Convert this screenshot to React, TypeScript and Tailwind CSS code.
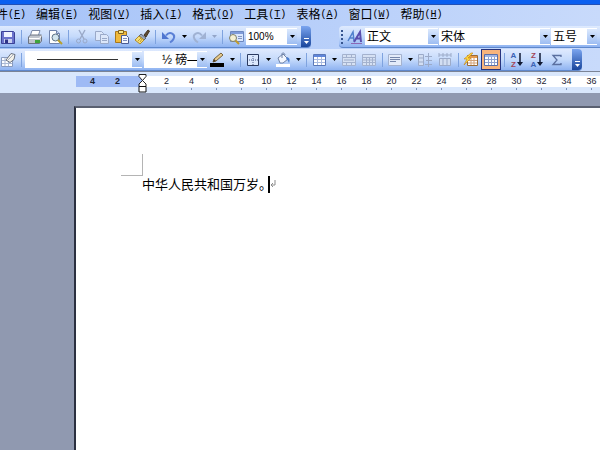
import React from 'react';
import { clsx } from 'clsx';

const menus = [
  { label: '文件', mnemonic: 'F' },
  { label: '编辑', mnemonic: 'E' },
  { label: '视图', mnemonic: 'V' },
  { label: '插入', mnemonic: 'I' },
  { label: '格式', mnemonic: 'O' },
  { label: '工具', mnemonic: 'T' },
  { label: '表格', mnemonic: 'A' },
  { label: '窗口', mnemonic: 'W' },
  { label: '帮助', mnemonic: 'H' },
];

const rulerMarks = Array.from({ length: 18 }, (_, i) => (i + 1) * 2);

const icons = {
  insertTable: (
    <>
      <path d="M1.5 5.5h11v9h-11z" fill="#fbfcff" stroke="#8a9bbd" />
      <path d="M2 8.5h10M2 11.5h10M5 6v8M8.500 6v8" stroke="#a9b8d4" />
      <path d="M6 8l5-6.500 4 1-1 5-4 3z" fill="#f4f2ea" stroke="#68707f" />
      <path d="M8 8l5-5" stroke="#a9b0be" />
    </>
  ),
  save: (
    <>
      <path d="M1.5 2.5h12l1 1v11h-13z" fill="#6a72cc" stroke="#3b4196" />
      <path d="M4 3h8v5H4z" fill="#eef2ff" />
      <path d="M4 10h8v4H4z" fill="#c9cff0" />
      <path d="M5 10.5h3V14H5z" fill="#2e3388" />
    </>
  ),
  print: (
    <>
      <path d="M5 1.5h8l-2 6H3z" fill="#fff" stroke="#7b8aa8" />
      <path d="M1.5 8l2-2h11v6l-2 2.500h-11z" fill="#c0c5cd" stroke="#6c7482" />
      <path d="M2 9.5h10.5l2-3" stroke="#fff" fill="none" />
      <path d="M8 12.500h5" stroke="#3fa43c" strokeWidth="3" />
    </>
  ),
  preview: (
    <>
      <path d="M2.5 1.5h7l3 3v10h-10z" fill="#fff" stroke="#7184ad" />
      <path d="M9.500 1.500v3h3" fill="#c5d4f0" stroke="#7184ad" />
      <circle cx="8.500" cy="8.500" r="3.500" fill="#d4e6ee" stroke="#5e7286" />
      <path d="M11 11l4 4" stroke="#b8a02c" strokeWidth="2" />
    </>
  ),
  cut: (
    <g stroke="#9aa9c8" fill="none">
      <path d="M5 1l5 9M11 1L6 10" strokeWidth="1.400" />
      <circle cx="4.500" cy="12" r="2" />
      <circle cx="11" cy="12" r="2" />
    </g>
  ),
  copy: (
    <g fill="#dce7fa" stroke="#9aa9c8">
      <path d="M1.500 2.500h6l2 2v7h-8z" />
      <path d="M6.500 5.500h6l2 2v7h-8z" />
      <path d="M8 9.500h5M8 11.500h5" />
    </g>
  ),
  paste: (
    <>
      <path d="M1.500 2.500h11v11h-11z" fill="#f0b93a" stroke="#a8781c" />
      <path d="M4.500 1.500h5v3h-5z" fill="#f7e88a" stroke="#80601f" />
      <path d="M7.500 6.500h5l2 2v6h-7z" fill="#f4f7ff" stroke="#4b5c94" />
      <path d="M9 9.500h4M9 11.500h4" stroke="#7f8fbd" />
    </>
  ),
  brush: (
    <>
      <path d="M10 6l4-5 1.500 1L12 8z" fill="#5d4a33" stroke="#463722" />
      <path d="M7 5l5 4-2 2-5-4z" fill="#9aa6b8" stroke="#5b6576" />
      <path d="M5 7l5 4-4 4-5-4z" fill="#f6df73" stroke="#b08a2c" />
      <path d="M4 12l3-3M6 13l2-3" stroke="#c59b2b" />
    </>
  ),
  undo: (
    <>
      <path d="M5 6.500c4-5 10-1 7.500 3.500-.7 1.500-2 2.500-3.500 3.500" fill="none" stroke="#5b80d6" strokeWidth="2" />
      <path d="M1 3v7h7z" fill="#4f76d0" />
    </>
  ),
  redo: (
    <>
      <path d="M11 6.500c-4-5-10-1-7.500 3.500.7 1.500 2 2.500 3.500 3.500" fill="none" stroke="#a0b2d3" strokeWidth="2" />
      <path d="M15 3v7H8z" fill="#a0b2d3" />
    </>
  ),
  readMode: (
    <>
      <path d="M2.500 2.500h13v10h-13z" fill="#d9e7ff" stroke="#6c88c0" />
      <path d="M3 3h12v2H3z" fill="#7f9cda" />
      <path d="M10 7.500h4M10 9.500h4" stroke="#8296c0" />
      <circle cx="5" cy="9" r="3.500" fill="#f4f1d4" stroke="#7c7f68" />
      <path d="M7.500 11.500l3.500 3.500" stroke="#c09a2c" strokeWidth="2" />
    </>
  ),
  styles: (
    <>
      <path d="M1 12L6 3l1 9M3 9h4" fill="none" stroke="#5080cc" strokeWidth="1.500" />
      <path d="M7 13l6-10 1 10M9 9.500h5" fill="none" stroke="#5a4fae" strokeWidth="2" />
      <path d="M4 14.500h11" stroke="#8c68b5" />
    </>
  ),
  lineColor: (
    <>
      <path d="M4 10l1-3 7-6 2 2-7 6z" fill="#e6c98c" stroke="#75623e" />
      <path d="M4 10l1-3 2 2z" fill="#4b3b24" />
      <path d="M1 11h14v4H1z" fill="#000" />
    </>
  ),
  border: (
    <>
      <path d="M2.500 2.500h11v11h-11z" fill="#dbe8fe" stroke="#2b3a60" />
      <path d="M8 4v9M4 8h9" stroke="#4b5d8b" strokeDasharray="1 1" />
    </>
  ),
  bucket: (
    <>
      <path d="M3 6l5-4 5 5-5 4H5z" fill="#f3f7ff" stroke="#6f82a6" />
      <path d="M7 6V2c0-2 3-1 3 1" fill="none" stroke="#6f82a6" />
      <path d="M12 5c3 1 3 3 2 6-1-2-1-3-3-4z" fill="#4b7fd0" />
      <path d="M1 12h14v3H1z" fill="#fff" />
    </>
  ),
  table: (
    <>
      <path d="M2.500 2.500h12v11h-12z" fill="#fff" stroke="#5a78b8" />
      <path d="M3 3h11v2H3z" fill="#5f86da" />
      <path d="M3 7.500h11M3 10.500h11M6.500 5v8M10.500 5v8" stroke="#a9bbe0" />
    </>
  ),
  merge: (
    <g fill="#d6e1f3" stroke="#a4b2ce">
      <path d="M1.500 2.500h13v11h-13z" />
      <path d="M2 5.500h12M2 10.500h12M5.500 3v2.500M10.500 3v2.500M5.500 11v2.500M10.500 11v2.500" />
      <path d="M3 7h10v2H3z" stroke="none" fill="#b9c6de" />
    </g>
  ),
  split: (
    <g fill="#d6e1f3" stroke="#a4b2ce">
      <path d="M1.500 2.500h13v11h-13z" />
      <path d="M2 5.500h12M2 8h12M2 10.500h12M5.500 5v9M8.500 5v9M11.500 5v9" />
    </g>
  ),
  align: (
    <g stroke="#a4b2ce">
      <path d="M1.500 2.500h13v11h-13z" fill="#e3ebf9" />
      <path d="M3 5.500h10M3 7.500h10M3 9.500h6" stroke="#7587ac" />
    </g>
  ),
  rows: (
    <g stroke="#9cabc9" fill="#d2def2">
      <path d="M1.500 2.500h5v11h-5zM1.500 6h5M1.500 10h5" />
      <path d="M8 4.500h7M8 12.500h7M11.500 1v14M9 8.500h6" />
    </g>
  ),
  columns: (
    <g stroke="#9cabc9" fill="#d2def2">
      <path d="M2.500 6.500h11v7h-11zM6 6.500v7M10 6.500v7" />
      <path d="M2 1v4M6 1v4M10 1v4M14 1v4M2 3h12" />
    </g>
  ),
  autoFormat: (
    <>
      <path d="M4.500 3.500h10v10h-10z" fill="#fff" stroke="#9b6b35" />
      <path d="M5 4h9v2H5z" fill="#e59a4e" />
      <path d="M5 8.500h9M5 11h9M8 6v7M11 6v7" stroke="#d3a37a" />
      <path d="M8 1L1 7h3l-3 6 7-7H5l5-5z" fill="#ffd93d" stroke="#c28316" strokeWidth=".6" />
    </>
  ),
  gridlines: (
    <>
      <path d="M1.500 2.500h13v11h-13z" fill="#fff" stroke="#5b6fa8" />
      <path d="M2 3h12v2H2z" fill="#9fb4e4" />
      <path d="M2 7.500h12M2 10.500h12M5.500 5v8M8.500 5v8M11.500 5v8" stroke="#8fa2d0" />
    </>
  ),
  sigma: (
    <path d="M12 5V3.500H4L8 8l-4 4.500h8V11" fill="none" stroke="#5a6f9f" strokeWidth="1.300" />
  ),
};

type IconName = keyof typeof icons;

const Icon = ({ name }: { name: IconName }) => (
  <svg viewBox="0 0 16 16" className="h-4 w-4 shrink-0" fill="none" aria-hidden="true">
    {icons[name]}
  </svg>
);

const ToolButton = ({ icon, label, pressed = false }: { icon: IconName; label: string; pressed?: boolean }) => (
  <button
    type="button"
    aria-label={label}
    aria-pressed={pressed || undefined}
    className={clsx(
      'flex h-[21px] w-5 shrink-0 items-center justify-center',
      pressed && 'border border-[#27347e] bg-[#f8b47c]',
    )}
  >
    <Icon name={icon} />
  </button>
);

const SortButton = ({ top, bottom, label }: { top: string; bottom: string; label: string }) => (
  <button type="button" aria-label={label} className="flex h-[21px] w-5 shrink-0 items-center justify-center gap-px">
    <span className="flex flex-col text-[8px] leading-[9px] font-bold">
      <span className={top === 'A' ? 'text-[#3b62b5]' : 'text-[#a34455]'}>{top}</span>
      <span className={bottom === 'A' ? 'text-[#3b62b5]' : 'text-[#a34455]'}>{bottom}</span>
    </span>
    <svg viewBox="0 0 6 14" className="h-3.5 w-1.5" aria-hidden="true">
      <path d="M3 0v10" stroke="#111a33" strokeWidth="1.500" />
      <path d="M0 9h6L3 13z" fill="#111a33" />
    </svg>
  </button>
);

const Triangle = ({ muted = false }: { muted?: boolean }) => (
  <svg viewBox="0 0 5 3" className="h-[3px] w-[5px]" aria-hidden="true">
    <path d="M0 0h5L2.500 3z" fill={muted ? '#93a5c8' : '#000'} />
  </svg>
);

const DropArrow = ({ label, muted }: { label: string; muted?: boolean }) => (
  <button type="button" aria-label={label} className="flex h-[21px] w-2.5 shrink-0 items-center justify-center">
    <Triangle muted={muted} />
  </button>
);

const Separator = ({ className = 'w-1.5' }: { className?: string }) => (
  <span className={clsx('flex h-3.5 shrink-0 justify-center', className)}>
    <span className="w-px bg-[#7fa3df]" />
  </span>
);

type ComboProps = { label: string; value: string; className: string; textClass?: string; line?: boolean };

const Combo = ({ label, value, className, textClass = 'pl-0.5 text-[12px]', line }: ComboProps) => (
  <span className={clsx('relative flex h-[17px] shrink-0 bg-white', className)}>
    <select aria-label={label} className={clsx('h-full w-full appearance-none pr-2.5 text-black outline-none', textClass)}>
      <option>{value}</option>
    </select>
    {line && <span className="pointer-events-none absolute top-2 right-6 left-3 h-px bg-[#333]" />}
    <span className="pointer-events-none absolute inset-y-px right-0 flex w-2.5 items-center justify-center bg-gradient-to-b from-[#dce9fd] to-[#9dbdf2]">
      <Triangle />
    </span>
  </span>
);

const MoreButtons = () => (
  <button
    type="button"
    aria-label="工具栏选项"
    className="ml-auto flex w-2.5 shrink-0 flex-col items-center justify-end gap-0.5 self-stretch rounded-r-sm bg-gradient-to-b from-[#7ba5f0] to-[#1a469c] pb-[3px]"
  >
    <span className="h-px w-[5px] bg-white" />
    <svg viewBox="0 0 5 3" className="h-[3px] w-[5px]" aria-hidden="true">
      <path d="M0 0h5L2.500 3z" fill="#fff" />
    </svg>
  </button>
);

const barClass =
  'flex h-[22px] shrink-0 items-center border-b border-[#5f88cc] bg-gradient-to-b from-[#dfeafe] via-[#c5dafb] to-[#8fb3f1]';

const StandardBar = () => (
  <div role="toolbar" aria-label="常用" className={clsx(barClass, 'w-[311px] rounded-r-sm')}>
    <div className="-ml-0.5 flex items-center">
      <ToolButton icon="save" label="保存" />
      <Separator className="w-[7px]" />
      <ToolButton icon="print" label="打印" />
      <ToolButton icon="preview" label="打印预览" />
      <Separator className="w-[7px]" />
      <ToolButton icon="cut" label="剪切" />
      <ToolButton icon="copy" label="复制" />
      <ToolButton icon="paste" label="粘贴" />
      <ToolButton icon="brush" label="格式刷" />
      <Separator className="w-[7px]" />
      <ToolButton icon="undo" label="撤消" />
      <DropArrow label="撤消列表" />
      <ToolButton icon="redo" label="恢复" />
      <DropArrow label="恢复列表" muted />
      <Separator className="w-[7px]" />
      <ToolButton icon="readMode" label="文档结构图" />
      <Combo label="显示比例" value="100%" className="w-[51px]" textClass="pl-0.5 text-[10px]" />
    </div>
    <MoreButtons />
  </div>
);

const FormatBar = () => (
  <div role="toolbar" aria-label="格式" className={clsx(barClass, 'ml-7 min-w-0 flex-1 shrink overflow-hidden rounded-l-sm')}>
    <span className="mx-0.5 flex w-0.5 shrink-0 flex-col gap-0.5">
      {[0, 1, 2, 3].map((dot) => (
        <span key={dot} className="h-0.5 bg-[#35548f]" />
      ))}
    </span>
    <ToolButton icon="styles" label="格式窗格" />
    <div className="flex gap-px">
      <Combo label="样式" value="正文" className="w-[73px]" />
      <Combo label="字体" value="宋体" className="w-[111px]" />
      <Combo label="字号" value="五号" className="w-[46px]" />
    </div>
  </div>
);

const TableBar = () => (
  <div role="toolbar" aria-label="表格和边框" className={clsx(barClass, 'w-[582px] rounded-r-sm')}>
    <div className="-ml-0.5 flex items-center">
      <ToolButton icon="insertTable" label="绘制表格" />
      <Separator className="w-[7px]" />
      <div className="flex gap-0.5">
        <Combo label="线型" value="" className="w-[117px]" line />
        <Combo label="粗细" value="½ 磅—" className="w-[63px]" textClass="pl-[18px] text-[12px]" />
      </div>
      <ToolButton icon="lineColor" label="边框颜色" />
      <DropArrow label="边框颜色列表" />
      <Separator />
      <ToolButton icon="border" label="外侧框线" />
      <DropArrow label="框线列表" />
      <ToolButton icon="bucket" label="底纹颜色" />
      <DropArrow label="底纹颜色列表" />
      <Separator />
      <ToolButton icon="table" label="插入表格" />
      <DropArrow label="插入列表" />
      <ToolButton icon="merge" label="合并单元格" />
      <ToolButton icon="split" label="拆分单元格" />
      <Separator />
      <ToolButton icon="align" label="对齐" />
      <DropArrow label="对齐列表" />
      <ToolButton icon="rows" label="平均分布各行" />
      <ToolButton icon="columns" label="平均分布各列" />
      <Separator />
      <ToolButton icon="autoFormat" label="自动套用格式" />
      <ToolButton icon="gridlines" label="显示虚框" pressed />
      <Separator />
      <SortButton top="A" bottom="Z" label="升序排序" />
      <SortButton top="Z" bottom="A" label="降序排序" />
      <ToolButton icon="sigma" label="自动求和" />
    </div>
    <MoreButtons />
  </div>
);

const RulerMark = ({ value }: { value: number }) => (
  <span className="flex w-[25px] shrink-0 flex-col items-center">
    <span className="h-[11px] shrink-0 text-[9px] leading-[11px] font-medium">{value}</span>
    <span className="mt-px h-0.5 w-px shrink-0 bg-[#7d92b8]" />
  </span>
);

const Ruler = () => (
  <div className="relative flex h-[21px] overflow-hidden bg-[#d9e7fc] pt-1 text-[#1c2333]">
    <div className="ml-[76px] flex h-[11px] w-[66px] shrink-0 bg-[#9ebaf5]">
      <span className="ml-1 w-[25px] text-center text-[9px] leading-[11px] font-bold">4</span>
      <span className="w-[25px] text-center text-[9px] leading-[11px] font-bold">2</span>
    </div>
    <div className="flex h-[11px] flex-1 bg-white pl-3">
      {rulerMarks.map((mark) => (
        <RulerMark key={mark} value={mark} />
      ))}
    </div>
    {/* Indent markers */}
    <svg viewBox="0 0 9 19" className="absolute top-0.5 left-[138px] h-[19px] w-[9px]" aria-hidden="true">
      <path d="M1 .5h7v2L4.500 6.500 1 2.500zM4.500 6.500L8 10v2.500H1V10z" fill="#fff" stroke="#222" />
      <path d="M1 12.500h7v5.500H1z" fill="#fff" stroke="#111" />
    </svg>
  </div>
);

const App = () => {
  return (
    <div className="flex min-h-screen flex-col overflow-hidden bg-[#9099b0] font-['Liberation_Sans','Noto_Sans_CJK_SC',sans-serif] text-black">
      <div className="h-1 bg-[#0a5ff0]" />
      <header className="border-t border-[#2351b5] bg-gradient-to-r from-[#a6c3f8] to-[#c8dafb]">
        <nav className="-ml-4 flex h-[21px] gap-2.5 pb-0.5">
          {menus.map((menu) => (
            <button key={menu.mnemonic} type="button" className="flex shrink-0 items-center text-[12px] leading-4">
              {menu.label}
              <span className="font-['Liberation_Mono',monospace] text-[10px]">
                (<span className="underline">{menu.mnemonic}</span>)
              </span>
            </button>
          ))}
        </nav>
        <div className="flex">
          <StandardBar />
          <FormatBar />
        </div>
        <div className="mt-px flex border-b border-[#7b8496]">
          <TableBar />
        </div>
      </header>
      <Ruler />
      <main className="flex flex-1 flex-col pt-[13px] pl-[74px]">
        <div className="flex-1 border-t-2 border-l-2 border-t-[#5a6070] border-l-[#2b3040] bg-white pt-[46px]">
          {/* Top-left corner of the text area */}
          <div className="ml-[45px] h-[22px] w-[22px] border-r border-b border-[#b4b4b4]" />
          <div className="flex pl-[66px]">
            <p className="text-[13px] leading-[18px] whitespace-nowrap">中华人民共和国万岁。</p>
            <span className="-ml-1 h-[17px] w-0.5 bg-black" />
            <svg viewBox="0 0 6 8" className="mt-1 h-2 w-1.5" fill="none" aria-hidden="true">
              <path d="M5 0v5H1M3 3L1 5l2 2" stroke="#8c8c8c" />
            </svg>
          </div>
        </div>
      </main>
    </div>
  );
};

export default App;
